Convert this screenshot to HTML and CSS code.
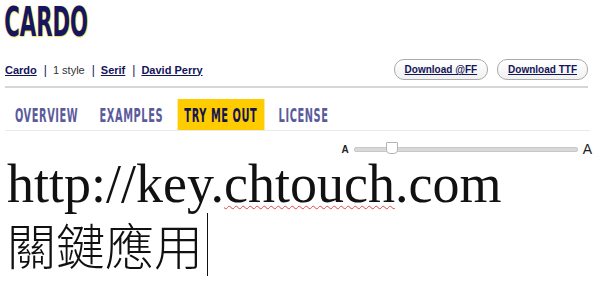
FILE: index.html
```html
<!DOCTYPE html>
<html>
<head>
<meta charset="utf-8">
<link rel="stylesheet" href="styles.css">
</head>
<body>
<div class="page">
  <h1 class="title">CARDO</h1>
  <div class="info">
    <div class="meta">
      <a class="link" href="#">Cardo</a><span class="sep">|</span><span class="plain">1 style</span><span class="sep">|</span><a class="link" href="#">Serif</a><span class="sep">|</span><a class="link" href="#">David Perry</a>
    </div>
    <div class="buttons">
      <a class="btn" href="#">Download @FF</a>
      <a class="btn" href="#">Download TTF</a>
    </div>
  </div>
  <nav class="tabs">
    <div class="tabs-inner">
      <a class="tab" href="#">OVERVIEW</a>
      <a class="tab" href="#">EXAMPLES</a>
      <a class="tab active" href="#">TRY ME OUT</a>
      <a class="tab" href="#">LICENSE</a>
    </div>
  </nav>
  <div class="slider">
    <span class="a-small">A</span>
    <div class="track"><div class="thumb"></div></div>
    <span class="a-big">A</span>
  </div>
  <div class="sample">
    <div class="line1">http://key.<span class="spell">chtouch</span>.com</div>
    <div class="line2">關鍵應用<span class="caret"></span></div>
  </div>
</div>
</body>
</html>
```
FILE: styles.css
```css
html, body { margin: 0; padding: 0; background: #fff; }
.page { width: 600px; height: 291px; overflow: hidden; font-family: "Liberation Sans", Arial, sans-serif; }
.title {
  margin: 0; padding: 1px 0 0 7px; height: 44px;
  font-family: "DejaVu Sans Condensed", "DejaVu Sans", sans-serif;
  font-weight: bold; font-size: 40px; line-height: 42px;
  color: #161660;
  text-shadow: 0 0 2px #f0dc50, 1px 1px 1px #f3e36a;
  transform: scaleX(0.59); transform-origin: left top;
}
.info {
  display: flex; justify-content: space-between; align-items: center;
  margin: 0 12px 0 5px; padding: 14px 0 6px; border-bottom: 2px solid #d6d6d6;
}
.meta { font-size: 11px; color: #222; display: flex; align-items: center; }
.link { color: #14145a; font-weight: bold; text-decoration: underline; }
.sep { color: #14145a; margin: 0 6px 0 7px; font-size: 12px; }
.plain { color: #333; }
.buttons { display: flex; gap: 9px; }
.btn {
  display: inline-block; font-size: 10px; font-weight: bold; color: #14145a;
  text-decoration: underline; padding: 4px 10px; border: 1px solid #aaa; border-radius: 10px;
  background: linear-gradient(#fff, #f1f1f1);
}
.tabs {
  margin: 11px 10px 0 5px; padding-left: 3px; height: 31px; border-bottom: 1px solid #eaeaea;
}
.tabs-inner {
  display: flex; width: max-content; height: 31px; transform: scaleX(0.575); transform-origin: left top;
}
.tab {
  display: flex; align-items: center; padding: 0 12px; margin-right: 13px; flex-shrink: 0; white-space: nowrap;
  font-family: "DejaVu Sans Condensed", "DejaVu Sans", sans-serif; font-weight: bold;
  font-size: 19px; letter-spacing: 1px; color: #5b5b9c; text-decoration: none;
}
.tab.active { background: #ffcc00; color: #141450; }
.slider { display: flex; align-items: center; justify-content: flex-end; margin: 10px 8px 0 0; height: 16px; }
.a-small { font-size: 10px; font-weight: bold; color: #222; margin-right: 5px; }
.a-big { font-size: 14px; color: #222; margin-left: 5px; }
.track { position: relative; width: 222px; height: 3px; background: #d9d9d9; border: 1px solid #c8c8c8; border-radius: 2px; }
.thumb {
  position: absolute; left: 31px; top: -6px; width: 10px; height: 10px; background: #fff;
  border: 1px solid #b5b5b5; border-radius: 1px 1px 4px 4px;
}
.sample { font-family: "Liberation Serif", "Noto Sans CJK TC", serif; color: #111; padding-left: 7px; margin-top: -3px; }
.line1 { font-size: 54px; line-height: 60px; }
.spell { text-decoration: underline wavy #e34444; text-decoration-thickness: 1px; text-underline-offset: 3px; }
.line2 { font-family: "Noto Sans CJK TC", serif; font-weight: 300; font-size: 49px; line-height: 64px; display: flex; align-items: center; margin-top: -2px; }
.caret { display: inline-block; width: 1px; height: 63px; background: #111; margin-left: 4px; }
```
